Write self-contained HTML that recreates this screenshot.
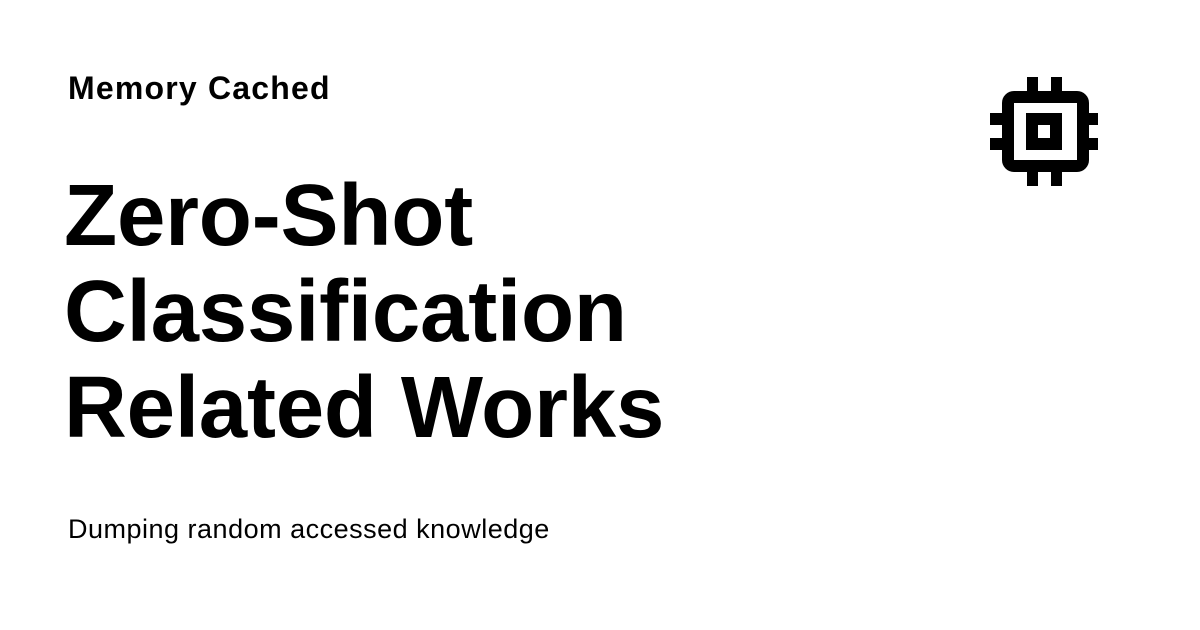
<!DOCTYPE html>
<html><head><style>
body{margin:0;width:1200px;height:630px;background:#fff;font-family:"Liberation Sans",Arial,sans-serif;color:#000;position:relative;overflow:hidden}
.site{position:absolute;left:68px;top:70px;font-size:32px;font-weight:bold;letter-spacing:1.2px}
.title{position:absolute;left:64px;top:168px;font-size:87px;font-weight:bold;line-height:96px;letter-spacing:-0.2px}
.sub{position:absolute;left:68px;top:514px;font-size:27px;letter-spacing:0.5px}
svg{position:absolute;left:0;top:0}
</style></head><body>
<div class="site">Memory Cached</div>
<div class="title">Zero-Shot<br>Classification<br>Related Works</div>
<div class="sub">Dumping random accessed knowledge</div>
<svg width="1200" height="630">
<rect x="1008" y="97" width="75" height="69" rx="6" fill="none" stroke="#000" stroke-width="12"/>
<rect x="1032" y="119" width="24" height="25" fill="none" stroke="#000" stroke-width="12"/>
<g fill="#000">
<rect x="1027" y="77" width="11" height="16"/><rect x="1051" y="77" width="11" height="16"/>
<rect x="1027" y="170" width="11" height="16"/><rect x="1051" y="170" width="11" height="16"/>
<rect x="990" y="113" width="14" height="12"/><rect x="990" y="138" width="14" height="12"/>
<rect x="1087" y="113" width="11" height="12"/><rect x="1087" y="138" width="11" height="12"/>
</g>
</svg>
</body></html>
